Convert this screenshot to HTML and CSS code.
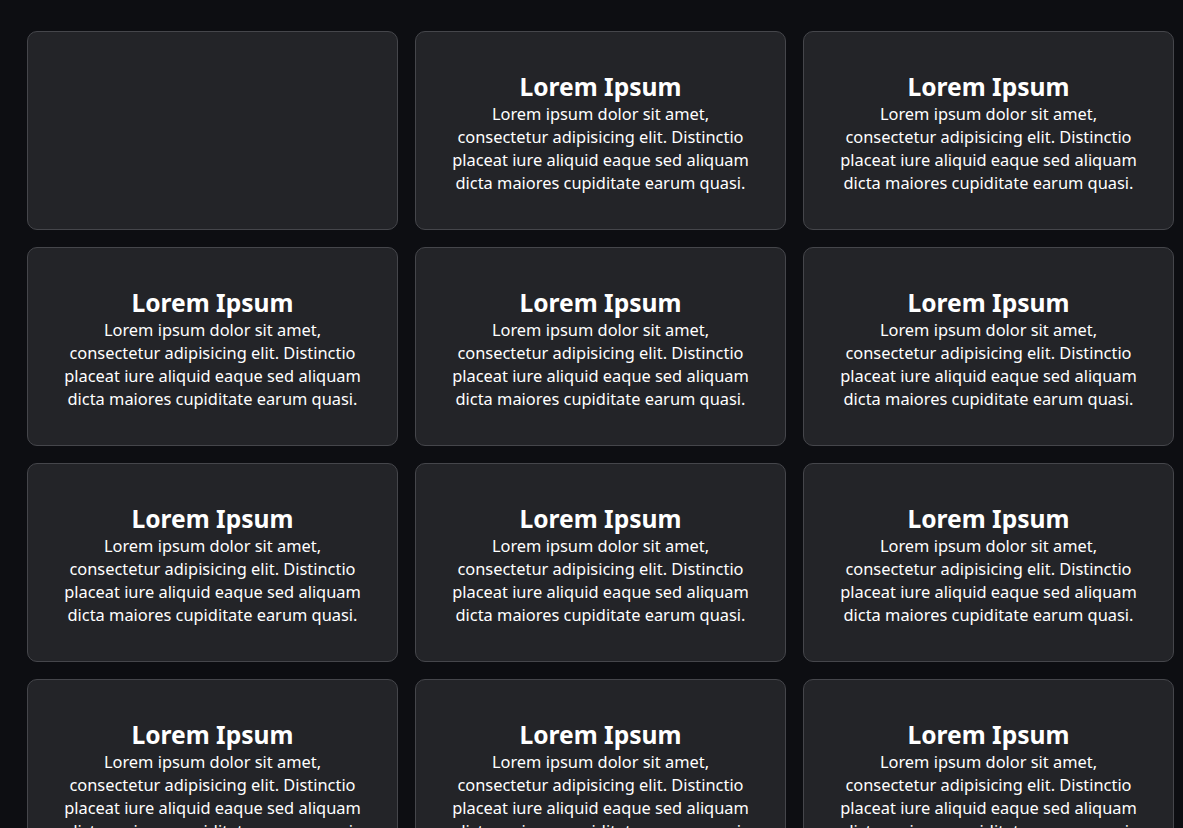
FILE: index.html
```html
<!DOCTYPE html>
<html lang="en">
<head>
<meta charset="utf-8">
<title>Cards</title>
<link rel="stylesheet" href="styles.css">
</head>
<body>
<main class="grid">
  <div class="card"></div>
  <div class="card"><h2 class="title">Lorem Ipsum</h2><p class="text">Lorem ipsum dolor sit amet, consectetur adipisicing elit. Distinctio placeat iure aliquid eaque sed aliquam dicta maiores cupiditate earum quasi.</p></div>
  <div class="card"><h2 class="title">Lorem Ipsum</h2><p class="text">Lorem ipsum dolor sit amet, consectetur adipisicing elit. Distinctio placeat iure aliquid eaque sed aliquam dicta maiores cupiditate earum quasi.</p></div>
  <div class="card"><h2 class="title">Lorem Ipsum</h2><p class="text">Lorem ipsum dolor sit amet, consectetur adipisicing elit. Distinctio placeat iure aliquid eaque sed aliquam dicta maiores cupiditate earum quasi.</p></div>
  <div class="card"><h2 class="title">Lorem Ipsum</h2><p class="text">Lorem ipsum dolor sit amet, consectetur adipisicing elit. Distinctio placeat iure aliquid eaque sed aliquam dicta maiores cupiditate earum quasi.</p></div>
  <div class="card"><h2 class="title">Lorem Ipsum</h2><p class="text">Lorem ipsum dolor sit amet, consectetur adipisicing elit. Distinctio placeat iure aliquid eaque sed aliquam dicta maiores cupiditate earum quasi.</p></div>
  <div class="card"><h2 class="title">Lorem Ipsum</h2><p class="text">Lorem ipsum dolor sit amet, consectetur adipisicing elit. Distinctio placeat iure aliquid eaque sed aliquam dicta maiores cupiditate earum quasi.</p></div>
  <div class="card"><h2 class="title">Lorem Ipsum</h2><p class="text">Lorem ipsum dolor sit amet, consectetur adipisicing elit. Distinctio placeat iure aliquid eaque sed aliquam dicta maiores cupiditate earum quasi.</p></div>
  <div class="card"><h2 class="title">Lorem Ipsum</h2><p class="text">Lorem ipsum dolor sit amet, consectetur adipisicing elit. Distinctio placeat iure aliquid eaque sed aliquam dicta maiores cupiditate earum quasi.</p></div>
  <div class="card"><h2 class="title">Lorem Ipsum</h2><p class="text">Lorem ipsum dolor sit amet, consectetur adipisicing elit. Distinctio placeat iure aliquid eaque sed aliquam dicta maiores cupiditate earum quasi.</p></div>
  <div class="card"><h2 class="title">Lorem Ipsum</h2><p class="text">Lorem ipsum dolor sit amet, consectetur adipisicing elit. Distinctio placeat iure aliquid eaque sed aliquam dicta maiores cupiditate earum quasi.</p></div>
  <div class="card"><h2 class="title">Lorem Ipsum</h2><p class="text">Lorem ipsum dolor sit amet, consectetur adipisicing elit. Distinctio placeat iure aliquid eaque sed aliquam dicta maiores cupiditate earum quasi.</p></div>
</main>
</body>
</html>
```
FILE: styles.css
```css
html, body {
  margin: 0;
  padding: 0;
  background: #0d0e12;
}
body {
  font-family: "Noto Sans", "Open Sans", sans-serif;
  color: #ffffff;
  overflow: hidden;
}
.grid {
  display: grid;
  grid-template-columns: repeat(3, 371px);
  gap: 17px;
  padding: 31px 27px;
}
.card {
  box-sizing: border-box;
  height: 199px;
  background: #232428;
  border: 1px solid #45464b;
  border-radius: 10px;
  display: flex;
  flex-direction: column;
  justify-content: center;
  align-items: center;
  text-align: center;
  padding: 4px 0 0;
}
.title {
  margin: 0;
  font-size: 24.6px;
  font-weight: 700;
  line-height: 30px;
}
.text {
  margin: 0;
  width: 306px;
  font-size: 16.4px;
  line-height: 23px;
}
```
